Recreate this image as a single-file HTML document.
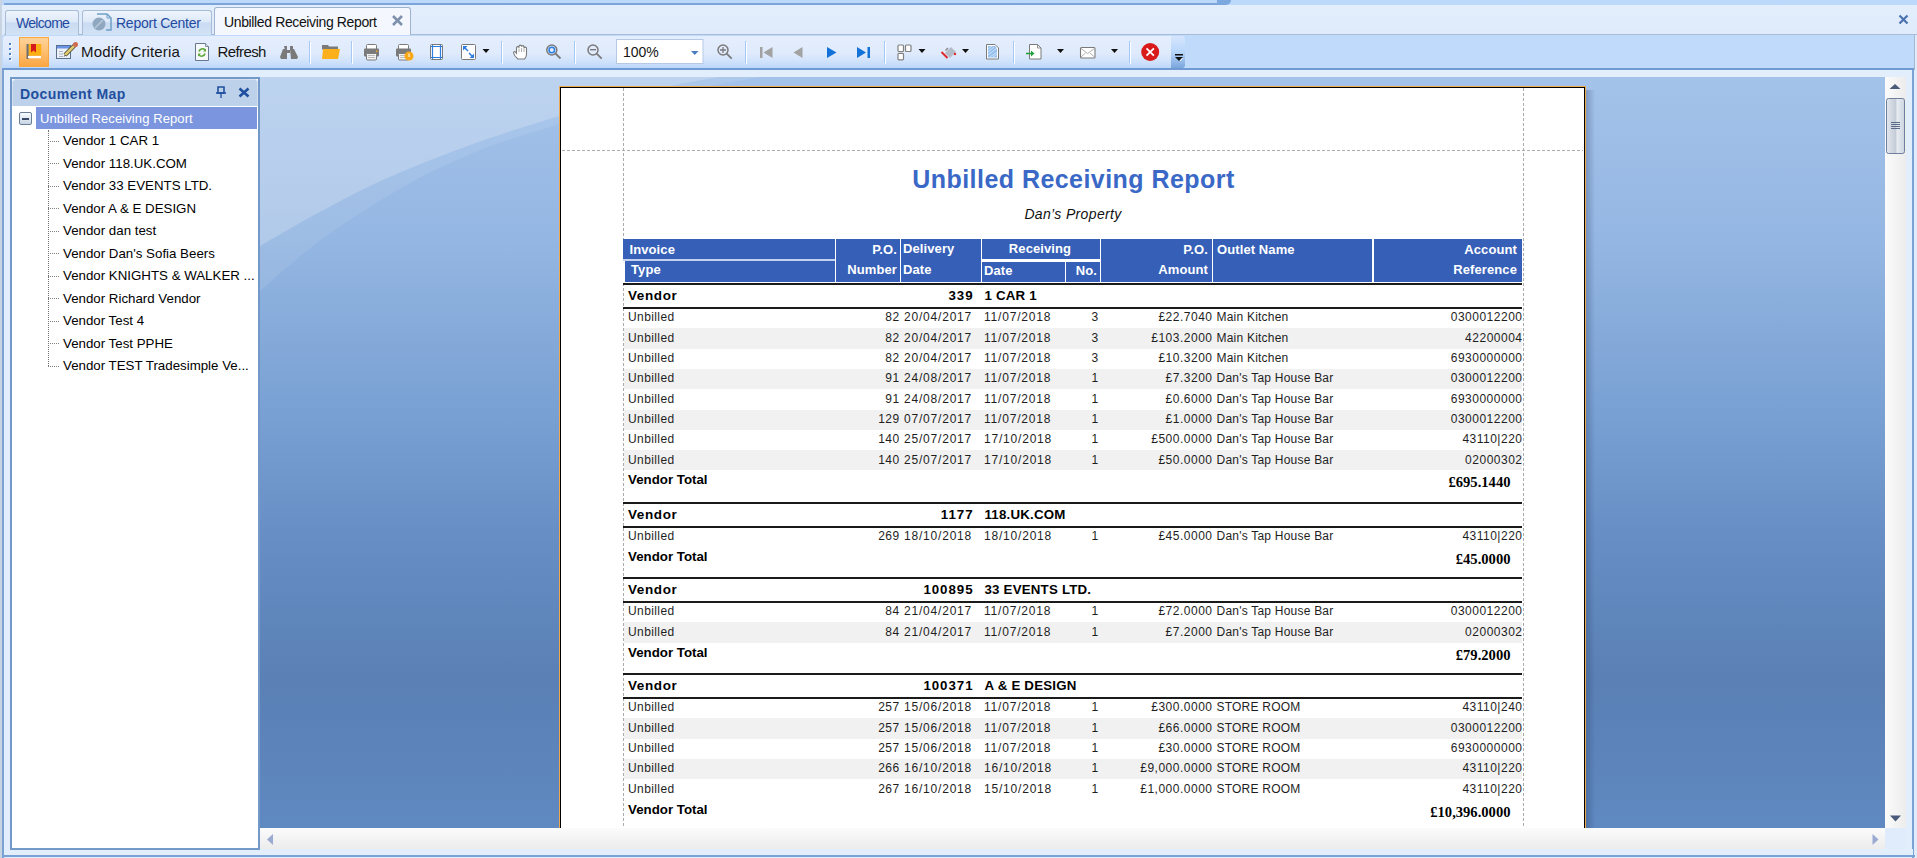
<!DOCTYPE html>
<html><head><meta charset="utf-8">
<style>
*{box-sizing:border-box}
html,body{margin:0;padding:0}
body{width:1917px;height:858px;overflow:hidden;position:relative;background:#e0ecfc;font-family:"Liberation Sans",sans-serif;color:#000}
.a{position:absolute}
.t{position:absolute;white-space:nowrap;line-height:1}
/* tabs */
.tab{position:absolute;top:10px;height:25px;border:1px solid #a9bcd6;border-bottom:none;border-radius:3px 3px 0 0;background:linear-gradient(#eef4fc 0%,#dde9f8 45%,#c9dbf2 50%,#d3e3f6 100%)}
.tabtxt{position:absolute;top:16.4px;font-size:14px;color:#1f4aa0;line-height:1}
/* toolbar */
.sep{position:absolute;top:41px;width:2px;height:23px;border-left:1px solid #9cbde8;border-right:1px solid #fff}
.dd{position:absolute;top:50px;width:0;height:0;border-left:4px solid transparent;border-right:4px solid transparent;border-top:4px solid #111}
/* document map */
.dm{position:absolute;left:63px;font-size:13.3px;line-height:1;white-space:nowrap}
.dmh{position:absolute;left:48px;width:11px;border-top:1px dotted #808080}
/* report */
.rp{position:absolute;white-space:nowrap;line-height:1}
</style></head><body>

<!-- top band -->
<div class="a" style="left:0;top:0;width:1917px;height:5px;background:#bcd8fa"></div>
<div class="a" style="left:4px;top:3px;width:1216px;height:2px;background:#7aa4da"></div><div class="a" style="left:1217px;top:0;width:14px;height:5px;background:#7ca8e0;border-radius:0 0 6px 0"></div>
<div class="a" style="left:0;top:5px;width:1917px;height:30px;background:linear-gradient(#e2eefc,#dfebfb)"></div>
<div class="a" style="left:0;top:0;width:2px;height:858px;background:#c8d4e2"></div>

<!-- tab strip bottom line -->
<div class="a" style="left:4px;top:34px;width:1913px;height:1px;background:#a8bcd8"></div>

<!-- tabs -->
<div class="tab" style="left:5px;width:74px"></div>
<div class="tabtxt" style="left:16px;letter-spacing:-0.7px">Welcome</div>
<div class="tab" style="left:82px;width:130px"></div>
<svg class="a" style="left:91px;top:12px" width="22" height="20" viewBox="0 0 22 20">
 <path d="M6 2h10l4 4v12h-5" fill="none" stroke="#6fa0c8" stroke-width="1.5"/>
 <path d="M16 2v4h4" fill="none" stroke="#6fa0c8" stroke-width="1"/>
 <circle cx="8" cy="12" r="6.5" fill="#8fa8c0"/>
 <path d="M4 16l8-8" stroke="#b8cadc" stroke-width="1.5"/>
</svg>
<div class="tabtxt" style="left:116px;letter-spacing:-0.25px">Report Center</div>
<div class="a" style="left:214px;top:7px;width:197px;height:28px;border:1px solid #9fb3d0;border-bottom:none;border-radius:3px 3px 0 0;background:#f4f8fe"></div>
<div class="tabtxt" style="left:224px;top:15.4px;color:#111;letter-spacing:-0.37px">Unbilled Receiving Report</div>
<svg class="a" style="left:391px;top:14px" width="13" height="13" viewBox="0 0 13 13"><path d="M2 2L11 11M11 2L2 11" stroke="#7f90ac" stroke-width="2.6"/></svg>

<!-- main close x -->
<svg class="a" style="left:1898px;top:14px" width="11" height="11" viewBox="0 0 11 11"><path d="M1.5 1.5L9.5 9.5M9.5 1.5L1.5 9.5" stroke="#4a72b0" stroke-width="2.2"/></svg>

<!-- toolbar area -->
<div class="a" style="left:2px;top:35px;width:1912px;height:35px;background:#c0dafc"></div>
<div class="a" style="left:2px;top:35px;width:1912px;height:35px;border-bottom:2px solid #6f9ad2"></div>
<div class="a" style="left:3px;top:36px;width:1169px;height:32px;border-radius:3px 0 0 3px;background:linear-gradient(#e4eefd 0%,#dfeafc 55%,#cfe2fb 80%,#bcd6fa 100%)"></div>
<div class="a" style="left:1171px;top:36px;width:14px;height:32px;border-radius:0 3px 3px 0;background:linear-gradient(#d6e6fc 0%,#b8d6fb 50%,#7aa6dc 100%)"></div>

<!-- below toolbar strip -->
<div class="a" style="left:2px;top:70px;width:1913px;height:7px;background:#e2eefc"></div>
<!-- outer frame borders -->
<div class="a" style="left:2px;top:70px;width:2px;height:788px;background:#7aa2d4"></div>
<div class="a" style="left:1912px;top:70px;width:2px;height:788px;background:#7aa2d4"></div><div class="a" style="left:1914px;top:35px;width:3px;height:823px;background:#e0ecfa"></div><div class="a" style="left:1914px;top:35px;width:1px;height:35px;background:#a4b8d4"></div>
<div class="a" style="left:2px;top:855px;width:1913px;height:2px;background:#7aa2d4"></div>
<div class="a" style="left:4px;top:77px;width:6px;height:778px;background:#e2eefc"></div>
<div class="a" style="left:1906px;top:77px;width:6px;height:778px;background:#e2eefc"></div>
<div class="a" style="left:4px;top:849px;width:1909px;height:6px;background:#e2eefc"></div>

<!-- TOOLBAR ICONS -->
<!-- grip -->
<svg class="a" style="left:0;top:35px" width="1200" height="35" viewBox="0 35 1200 35">
 <g fill="#fff"><rect x="10" y="44" width="2" height="2"/><rect x="10" y="49" width="2" height="2"/><rect x="10" y="54" width="2" height="2"/><rect x="10" y="59" width="2" height="2"/></g>
 <g fill="#4d7fc4"><rect x="9" y="43" width="2" height="2"/><rect x="9" y="48" width="2" height="2"/><rect x="9" y="53" width="2" height="2"/><rect x="9" y="58" width="2" height="2"/></g>
 <!-- bookmark button -->
 <defs><linearGradient id="og" x1="0" y1="0" x2="0" y2="1"><stop offset="0" stop-color="#fdd39c"/><stop offset="0.5" stop-color="#fdbf70"/><stop offset="1" stop-color="#fba542"/></linearGradient>
 <linearGradient id="sb" x1="0" y1="0" x2="0" y2="1"><stop offset="0" stop-color="#f4f6f8"/><stop offset="1" stop-color="#c4cdd8"/></linearGradient></defs>
 <rect x="19.5" y="37.5" width="29" height="29" fill="url(#og)" stroke="#f9a740" stroke-width="1"/>
 <rect x="26.5" y="44" width="2.3" height="15" fill="#707070"/>
 <rect x="28.8" y="44" width="12.4" height="11.5" fill="#fcb014"/>
 <rect x="28" y="56" width="13" height="2.2" fill="#fff"/>
 <path d="M31 44h5v8.5l-2.5-2l-2.5 2z" fill="#d41a1a"/>
 <!-- modify criteria -->
 <rect x="56.5" y="45.5" width="14" height="13" fill="#eef2f8" stroke="#58708e" stroke-width="1"/>
 <rect x="57" y="46" width="13" height="2.5" fill="#6a94e4"/>
 <g stroke="#a8b4c4" stroke-width="1"><path d="M59 51.5h4M59 54h4M59 56.5h4"/></g>
 <path d="M65 55l10-10" stroke="#3a3a2a" stroke-width="4"/>
 <path d="M65 55l10-10" stroke="#e0cc70" stroke-width="2.6"/>
 <circle cx="75.5" cy="44.5" r="2.5" fill="#d06a50"/>
 <path d="M63.5 57l1.5-2.2 0.8 0.8z" fill="#222"/>
 <!-- refresh -->
 <path d="M195.5 43.5h10l3 3v14h-13z" fill="#f6f8fa" stroke="#687890" stroke-width="1"/>
 <path d="M205.5 43.5v3h3" fill="#dde4ec" stroke="#687890" stroke-width="0.8"/>
 <path d="M199 51.5a3.5 3.5 0 0 1 6 -1.5" fill="none" stroke="#5ca838" stroke-width="1.6"/>
 <path d="M206 48.5v3h-3z" fill="#5ca838"/>
 <path d="M205 53.5a3.5 3.5 0 0 1 -6 1.5" fill="none" stroke="#5ca838" stroke-width="1.6"/>
 <path d="M198 56.5v-3h3z" fill="#5ca838"/>
 <!-- binoculars -->
 <g fill="#7a7a7a"><path d="M284 46h3v3l-1 1h-1z"/><path d="M290 46h3v4h-2l-1-1z"/>
 <path d="M283 49h4v10h-6l-1-2z"/><path d="M290 49h4l4 8-1 2h-6z"/><rect x="287" y="50" width="3" height="3"/></g>
 <!-- separators -->
 <g stroke="#a6c8f4" stroke-width="1"><path d="M309.5 41v22M351.5 41v22M501.5 41v22M574.5 41v22M745.5 41v22M884.5 41v22M1013.5 41v22M1129.5 41v22"/></g>
 <g stroke="#fff" stroke-width="1"><path d="M310.5 42v22M352.5 42v22M502.5 42v22M575.5 42v22M746.5 42v22M885.5 42v22M1014.5 42v22M1130.5 42v22"/></g>
 <!-- folder -->
 <path d="M322 45h6l1 1.5h9v3h-16z" fill="#7a7a7a"/>
 <path d="M323 49h17l-2 10h-16z" fill="#fcb11c"/>
 <!-- printer 1 -->
 <g>
 <rect x="366.5" y="44.5" width="10" height="6" rx="1" fill="#fff" stroke="#7a7a7a"/>
 <rect x="364" y="48.5" width="15" height="8" rx="1" fill="#7a7a7a"/>
 <rect x="366.5" y="53.5" width="10" height="6.5" rx="1" fill="#f2f2f2" stroke="#7a7a7a"/>
 <path d="M368 55.5h7M368 57.5h7" stroke="#aaa" stroke-width="0.8"/>
 <rect x="376" y="50.5" width="1.5" height="1.5" fill="#f0a020"/>
 </g>
 <g>
 <rect x="398.5" y="44.5" width="10" height="6" rx="1" fill="#fff" stroke="#7a7a7a"/>
 <rect x="396" y="48.5" width="15" height="8" rx="1" fill="#7a7a7a"/>
 <rect x="398.5" y="53.5" width="10" height="6.5" rx="1" fill="#f2f2f2" stroke="#7a7a7a"/>
 <path d="M400 55.5h7M400 57.5h7" stroke="#aaa" stroke-width="0.8"/>
 <circle cx="409" cy="56" r="4.5" fill="#f8a818"/>
 <path d="M409 53.5v3.5" stroke="#fff" stroke-width="1"/>
 </g>
 <!-- page setup -->
 <rect x="430.5" y="44.5" width="12" height="15" rx="1" fill="#fff" stroke="#7a7a7a" stroke-width="1"/>
 <g stroke="#2c7ee0" stroke-width="1.2"><path d="M432.5 45v14M440.5 45v14M431 46.5h11M431 57.5h11"/></g>
 <!-- scale -->
 <rect x="461.5" y="44.5" width="14" height="15" rx="1" fill="#fff" stroke="#7a7a7a" stroke-width="1"/>
 <g stroke="#2c7ee0" stroke-width="1.5" fill="none"><path d="M464.5 47.5l3.5 3.5M472.5 56.5l-3.5-3.5"/></g>
 <path d="M463 46h4.5l-4.5 4.5z M474 58h-4.5l4.5-4.5z" fill="#2c7ee0"/>
 <!-- dropdowns -->
 <g fill="#111"><path d="M482.5 49h7l-3.5 4z"/><path d="M918.5 49h7l-3.5 4z"/><path d="M962 49h7l-3.5 4z"/><path d="M1057 49h7l-3.5 4z"/><path d="M1111 49h7l-3.5 4z"/></g>
 <!-- hand -->
 <path d="M518 59C516 57.5 514 55 513.6 53C513.3 51.8 514.6 51.2 515.6 52.2L516.5 53.2V47.8C516.5 46.2 519 46.2 519 47.8V46.3C519 44.7 521.5 44.7 521.5 46.3V46.8C521.5 45.2 524 45.2 524 46.8V48.3C524 46.7 526.5 46.7 526.5 48.3V54.5C526.5 56.5 525.5 58 524.5 59Z" fill="#fff" stroke="#7a7a7a" stroke-width="1.1"/>
 <path d="M519 48.5v3.5M521.5 48v4M524 48.5v3.5" stroke="#9a9a9a" stroke-width="0.8"/>
 <!-- zoom tool -->
 <circle cx="551.8" cy="50" r="5" fill="none" stroke="#7a7a7a" stroke-width="1.5"/>
 <circle cx="551.8" cy="50" r="2.8" fill="none" stroke="#2a80e0" stroke-width="1.5"/>
 <path d="M555.5 53.5l5 5" stroke="#7a7a7a" stroke-width="1.8"/>
 <!-- zoom out -->
 <circle cx="593" cy="50" r="5" fill="none" stroke="#7a7a7a" stroke-width="1.5"/>
 <path d="M590 49.7h6" stroke="#7a7a7a" stroke-width="1.4"/>
 <path d="M596.7 53.7l5 5" stroke="#7a7a7a" stroke-width="1.8"/>
 <!-- combo -->
 <rect x="616.5" y="39.5" width="86.5" height="24" fill="#fff" stroke="#b5c9e6" stroke-width="1"/>
 <path d="M691 51h7.5l-3.75 4z" fill="#4a7cc0"/>
 <!-- zoom in -->
 <circle cx="723" cy="50" r="5" fill="none" stroke="#7a7a7a" stroke-width="1.5"/>
 <path d="M720 50h6M723 47v6" stroke="#7a7a7a" stroke-width="1.3"/>
 <path d="M726.7 53.7l5 5" stroke="#7a7a7a" stroke-width="1.8"/>
 <!-- nav -->
 <g fill="#a2a2a2"><rect x="760" y="47" width="2.5" height="11"/><path d="M772.5 47v11l-9-5.5z"/><path d="M802.5 47v11l-9-5.5z"/></g>
 <g fill="#1272d8"><path d="M827 47v11l9.5-5.5z"/><path d="M857 47v11l9-5.5z"/><rect x="867.5" y="47" width="2.5" height="11"/></g>
 <!-- multipage -->
 <g fill="#fff" stroke="#808080" stroke-width="1.2"><rect x="898" y="45" width="5.5" height="6.5" rx="1"/><rect x="905.5" y="45" width="5.5" height="6.5" rx="1"/><rect x="898" y="53.3" width="5.5" height="6.5" rx="1"/></g>
 <!-- paint -->
 <path d="M945 53l6-6l5 5l-6 6z" fill="#b4bcc8"/>
 <path d="M945 50l2.5-2.5l1 1l-2.5 2.5z" fill="#888"/>
 <path d="M941.5 52l6 6" stroke="#e02828" stroke-width="2"/>
 <circle cx="955" cy="54" r="1.2" fill="#e02828"/>
 <!-- watermark -->
 <path d="M986.5 44.5h8.5l3.5 3.5v11h-12z" fill="#fff" stroke="#7a7a7a" stroke-width="1"/>
 <path d="M988 46h7l2 2.5v9h-9z" fill="#7ab0ec" opacity="0.8"/>
 <g stroke="#fff" stroke-width="0.6" opacity="0.9"><path d="M988 49l4 -3M988 52l6-5M988 55l9-7M990 57l7-5M993 57l4-3"/></g>
 <!-- export -->
 <path d="M1029.5 44.5h8l3.5 3.5v11h-11.5z" fill="#fff" stroke="#7a7a7a" stroke-width="1"/>
 <path d="M1037.5 44.5v3.5h3.5" fill="none" stroke="#7a7a7a" stroke-width="0.8"/>
 <path d="M1026 53.5h6" stroke="#22a040" stroke-width="1.6"/>
 <path d="M1031 50.5l3.5 3l-3.5 3z" fill="#22a040"/>
 <!-- email -->
 <rect x="1080.5" y="47.5" width="14.5" height="10.5" rx="1" fill="#fff" stroke="#7a7a7a" stroke-width="1.1"/>
 <path d="M1081 48.5l6.7 5l6.7-5M1081 57l4.5-4M1094.5 57l-4.5-4" fill="none" stroke="#9a9a9a" stroke-width="0.8"/>
 <!-- close -->
 <circle cx="1150.2" cy="52" r="9" fill="#d81a1a"/>
 <path d="M1146.5 48.3l7.4 7.4M1153.9 48.3l-7.4 7.4" stroke="#fff" stroke-width="1.8"/>
 <!-- customize -->
 <rect x="1175" y="54" width="8" height="1.5" fill="#111"/>
 <path d="M1175 57h8l-4 4z" fill="#111"/>
 <path d="M1180 61l2.5-3" stroke="#fff" stroke-width="1"/>
</svg>
<div class="t" style="left:81px;top:43.8px;font-size:15px;color:#151515;letter-spacing:0.15px">Modify Criteria</div>
<div class="t" style="left:217.5px;top:43.8px;font-size:15px;color:#151515;letter-spacing:-0.6px">Refresh</div>
<div class="t" style="left:623px;top:45.2px;font-size:14px;color:#151515">100%</div>


<!-- DOCUMENT MAP -->
<!-- document map panel -->
<div class="a" style="left:10px;top:77px;width:250px;height:773px;border:2px solid #7399c8;background:#fff"></div>
<div class="a" style="left:12px;top:79px;width:246px;height:27px;background:#bdd1ea;border-radius:4px 4px 0 0;border:1px solid #d2e0f2;border-bottom:none"></div>
<div class="t" style="left:20px;top:86.6px;font-size:14px;font-weight:bold;color:#1f4f9e;letter-spacing:0.45px">Document Map</div>
<svg class="a" style="left:210px;top:82px" width="45" height="20" viewBox="210 82 45 20">
 <path d="M218 87h6v6h-6z" fill="none" stroke="#1f4f9e" stroke-width="1.6"/>
 <path d="M216 93h10M221 93v5" stroke="#1f4f9e" stroke-width="1.3"/>
 <path d="M239.5 88.5l9 8M248.5 88.5l-9 8" stroke="#1f4f9e" stroke-width="2.6"/>
</svg>
<div class="a" style="left:12px;top:106px;width:246px;height:1px;background:#fff"></div>
<div class="a" style="left:36px;top:107px;width:221px;height:22px;background:#7b96df"></div>
<div class="a" style="left:19px;top:112px;width:13px;height:13px;border:1px solid #6a7e98;border-radius:2px;background:linear-gradient(#fafcfe,#c8d4e4)"></div>
<div class="a" style="left:22px;top:118px;width:7px;height:1.6px;background:#384a66"></div>
<div class="t" style="left:40px;top:111.5px;font-size:13px;color:#fff;letter-spacing:0.1px">Unbilled Receiving Report</div>
<div class="a" style="left:48px;top:130px;width:0;height:236px;border-left:1px dotted #707070"></div>
<div class="dmh" style="top:140.5px"></div>
<div class="dm" style="top:134.0px">Vendor 1 CAR 1</div>
<div class="dmh" style="top:163.0px"></div>
<div class="dm" style="top:156.5px">Vendor 118.UK.COM</div>
<div class="dmh" style="top:185.5px"></div>
<div class="dm" style="top:179.0px">Vendor 33 EVENTS LTD.</div>
<div class="dmh" style="top:208.0px"></div>
<div class="dm" style="top:201.5px">Vendor A &amp; E DESIGN</div>
<div class="dmh" style="top:230.5px"></div>
<div class="dm" style="top:224.0px">Vendor dan test</div>
<div class="dmh" style="top:253.0px"></div>
<div class="dm" style="top:246.5px">Vendor Dan's Sofia Beers</div>
<div class="dmh" style="top:275.5px"></div>
<div class="dm" style="top:269.0px">Vendor KNIGHTS &amp; WALKER ...</div>
<div class="dmh" style="top:298.0px"></div>
<div class="dm" style="top:291.5px">Vendor Richard Vendor</div>
<div class="dmh" style="top:320.5px"></div>
<div class="dm" style="top:314.0px">Vendor Test 4</div>
<div class="dmh" style="top:343.0px"></div>
<div class="dm" style="top:336.5px">Vendor Test PPHE</div>
<div class="dmh" style="top:365.5px"></div>
<div class="dm" style="top:359.0px">Vendor TEST Tradesimple Ve...</div>


<!-- VIEWER -->
<div class="a" style="left:260px;top:77px;width:1625px;height:751px;overflow:hidden">
<svg class="a" style="left:0;top:0" width="1625" height="751" viewBox="260 77 1625 751" preserveAspectRatio="none">
<defs><linearGradient id="vg" x1="0" y1="77" x2="0" y2="828" gradientUnits="userSpaceOnUse">
<stop offset="0" stop-color="#a4c3ea"/><stop offset="0.22" stop-color="#94b6e2"/><stop offset="0.46" stop-color="#779fd2"/><stop offset="0.6" stop-color="#6890c6"/><stop offset="0.8" stop-color="#5a80b5"/><stop offset="1" stop-color="#5f89c1"/></linearGradient></defs>
<rect x="260" y="77" width="1625" height="751" fill="url(#vg)"/>
<path d="M260 291C269.3 283.1 297.3 257.7 316 243.5C334.7 229.3 353.3 217.3 372 205.7C390.7 194.0 409.3 183.1 428 173.6C446.7 164.1 465.3 155.7 484 148.4C502.7 141.1 520.7 136.1 540 130C559.3 123.9 576.7 118.3 600 112C623.3 105.7 653.3 97.8 680 92C706.7 86.2 746.7 79.5 760 77L900 60L240 60L240 291z" fill="#fff" opacity="0.09"/>
<path d="M260 246C269.3 240.7 297.3 224.2 316 214C334.7 203.8 353.3 193.8 372 185C390.7 176.2 409.3 168.5 428 161C446.7 153.5 465.3 146.5 484 140C502.7 133.5 520.7 128.0 540 122C559.3 116.0 580.0 109.7 600 104C620.0 98.3 640.0 92.5 660 88C680.0 83.5 710.0 78.8 720 77L900 60L240 60L240 246z" fill="#fff" opacity="0.21"/>
</svg>
</div>
<div class="a" style="left:1586px;top:90px;width:9px;height:738px;background:linear-gradient(90deg,rgba(30,50,90,0.28),rgba(30,50,90,0))"></div>
<div class="a" style="left:559px;top:86px;width:1027px;height:760px;border:1px solid #f0a850;border-bottom:none"></div>
<div class="a" style="left:560px;top:87px;width:1025px;height:760px;border:1px solid #000;border-bottom:none;background:#fff"></div>
<div class="a" style="left:561px;top:88px;width:1023px;height:740px;overflow:hidden">
<div class="a" style="left:62px;top:0px;width:1px;height:740px;background:repeating-linear-gradient(180deg,#ababab 0 3px,transparent 3px 5px)"></div>
<div class="a" style="left:962px;top:0px;width:1px;height:740px;background:repeating-linear-gradient(180deg,#ababab 0 3px,transparent 3px 5px)"></div>
<div class="a" style="left:1px;top:62px;width:1021px;height:1px;background:repeating-linear-gradient(90deg,#ababab 0 3px,transparent 3px 5px)"></div>
<div class="rp" style="left:312.5px;width:400px;text-align:center;top:79px;font-weight:bold;font-size:25px;color:#3a68c6;letter-spacing:0.45px">Unbilled Receiving Report</div>
<div class="rp" style="left:312px;width:400px;text-align:center;top:119px;font-style:italic;font-size:14px;color:#111;letter-spacing:0.35px">Dan’s Property</div>
<div class="a" style="left:62px;top:151px;width:899px;height:43px;background:#c8d6ee"></div>
<div class="a" style="left:62px;top:151px;width:212px;height:20px;background:#365fb8"></div>
<div class="a" style="left:64px;top:172.5px;width:210px;height:21.5px;background:#365fb8"></div>
<div class="a" style="left:275px;top:151px;width:64px;height:43px;background:#365fb8"></div>
<div class="a" style="left:340px;top:151px;width:80px;height:43px;background:#365fb8"></div>
<div class="a" style="left:421px;top:151px;width:118px;height:19.5px;background:#365fb8"></div>
<div class="a" style="left:421px;top:174px;width:83px;height:20px;background:#365fb8"></div>
<div class="a" style="left:505px;top:174px;width:34px;height:20px;background:#365fb8"></div>
<div class="a" style="left:540px;top:151px;width:111px;height:43px;background:#365fb8"></div>
<div class="a" style="left:652px;top:151px;width:159px;height:43px;background:#365fb8"></div>
<div class="a" style="left:812.5px;top:151px;width:148.0px;height:43px;background:#365fb8"></div>
<div class="a" style="left:274px;top:151px;width:1px;height:43px;background:#fff"></div>
<div class="a" style="left:339px;top:151px;width:1px;height:43px;background:#fff"></div>
<div class="a" style="left:420px;top:151px;width:1px;height:43px;background:#fff"></div>
<div class="a" style="left:539px;top:151px;width:1px;height:43px;background:#fff"></div>
<div class="a" style="left:651px;top:151px;width:1px;height:43px;background:#fff"></div>
<div class="a" style="left:811px;top:151px;width:1.5px;height:43px;background:#fff"></div>
<div class="a" style="left:421px;top:170.5px;width:118px;height:3.5px;background:#fff"></div>
<div class="a" style="left:504px;top:174px;width:1px;height:20px;background:#fff"></div>
<div class="a" style="left:62px;top:171px;width:212px;height:1.5px;background:#c4d2ee"></div>
<div class="a" style="left:62px;top:172.5px;width:2px;height:21.5px;background:#fff"></div>
<div class="rp" style="left:68.5px;top:154.5px;font-weight:bold;font-size:13px;color:#fff;letter-spacing:0.1px">Invoice</div>
<div class="rp" style="left:70px;top:175px;font-weight:bold;font-size:13px;color:#fff;letter-spacing:0.1px">Type</div>
<div class="rp" style="right:687px;top:154.5px;font-weight:bold;font-size:13px;color:#fff;letter-spacing:0.1px">P.O.</div>
<div class="rp" style="right:687px;top:175px;font-weight:bold;font-size:13px;color:#fff;letter-spacing:0.1px">Number</div>
<div class="rp" style="left:342px;top:154px;font-weight:bold;font-size:13px;color:#fff;letter-spacing:0.1px">Delivery</div>
<div class="rp" style="left:342px;top:175px;font-weight:bold;font-size:13px;color:#fff;letter-spacing:0.1px">Date</div>
<div class="rp" style="left:279px;width:400px;text-align:center;top:154px;font-weight:bold;font-size:13px;color:#fff;letter-spacing:0.1px">Receiving</div>
<div class="rp" style="left:423px;top:175.5px;font-weight:bold;font-size:13px;color:#fff;letter-spacing:0.1px">Date</div>
<div class="rp" style="right:487px;top:175.5px;font-weight:bold;font-size:13px;color:#fff;letter-spacing:0.1px">No.</div>
<div class="rp" style="right:376px;top:154.5px;font-weight:bold;font-size:13px;color:#fff;letter-spacing:0.1px">P.O.</div>
<div class="rp" style="right:376px;top:175px;font-weight:bold;font-size:13px;color:#fff;letter-spacing:0.1px">Amount</div>
<div class="rp" style="left:656px;top:154.5px;font-weight:bold;font-size:13px;color:#fff;letter-spacing:0.1px">Outlet Name</div>
<div class="rp" style="right:67px;top:154.5px;font-weight:bold;font-size:13px;color:#fff;letter-spacing:0.1px">Account</div>
<div class="rp" style="right:67px;top:175px;font-weight:bold;font-size:13px;color:#fff;letter-spacing:0.1px">Reference</div>
<div class="a" style="left:62px;top:195px;width:899px;height:2px;background:#1a1a1a"></div>
<div class="rp" style="left:67px;top:200.5px;font-weight:bold;font-size:14px;color:#000;font-size:13.5px;letter-spacing:0.6px">Vendor</div>
<div class="rp" style="right:610.5px;top:200.5px;font-weight:bold;font-size:14px;color:#000;font-size:13.3px;letter-spacing:0.95px">339</div>
<div class="rp" style="left:423.5px;top:200.5px;font-weight:bold;font-size:14px;color:#000;font-size:13.3px;letter-spacing:0.2px">1 CAR 1</div>
<div class="a" style="left:62px;top:219px;width:899px;height:1.6px;background:#1a1a1a"></div>
<div class="rp" style="left:67px;top:223.39999999999998px;font-size:12px;color:#1e1e1e;letter-spacing:0.4px">Unbilled</div>
<div class="rp" style="right:684.5px;top:223.39999999999998px;font-size:12px;color:#1e1e1e;letter-spacing:0.4px">82</div>
<div class="rp" style="left:343px;top:223.39999999999998px;font-size:12px;color:#1e1e1e;letter-spacing:0.4px;letter-spacing:0.8px">20/04/2017</div>
<div class="rp" style="left:423px;top:223.39999999999998px;font-size:12px;color:#1e1e1e;letter-spacing:0.4px;letter-spacing:0.8px">11/07/2018</div>
<div class="rp" style="right:485.5px;top:223.39999999999998px;font-size:12px;color:#1e1e1e;letter-spacing:0.4px">3</div>
<div class="rp" style="right:371.5px;top:223.39999999999998px;font-size:12px;color:#1e1e1e;letter-spacing:0.4px;letter-spacing:0.5px">£22.7040</div>
<div class="rp" style="left:655.5px;top:223.39999999999998px;font-size:12px;color:#1e1e1e;letter-spacing:0.4px;letter-spacing:0.22px">Main Kitchen</div>
<div class="rp" style="right:61.5px;top:223.39999999999998px;font-size:12px;color:#1e1e1e;letter-spacing:0.4px;letter-spacing:0.5px">0300012200</div>
<div class="a" style="left:63px;top:240.3px;width:898px;height:20.3px;background:#f1f1f1"></div>
<div class="rp" style="left:67px;top:243.7px;font-size:12px;color:#1e1e1e;letter-spacing:0.4px">Unbilled</div>
<div class="rp" style="right:684.5px;top:243.7px;font-size:12px;color:#1e1e1e;letter-spacing:0.4px">82</div>
<div class="rp" style="left:343px;top:243.7px;font-size:12px;color:#1e1e1e;letter-spacing:0.4px;letter-spacing:0.8px">20/04/2017</div>
<div class="rp" style="left:423px;top:243.7px;font-size:12px;color:#1e1e1e;letter-spacing:0.4px;letter-spacing:0.8px">11/07/2018</div>
<div class="rp" style="right:485.5px;top:243.7px;font-size:12px;color:#1e1e1e;letter-spacing:0.4px">3</div>
<div class="rp" style="right:371.5px;top:243.7px;font-size:12px;color:#1e1e1e;letter-spacing:0.4px;letter-spacing:0.5px">£103.2000</div>
<div class="rp" style="left:655.5px;top:243.7px;font-size:12px;color:#1e1e1e;letter-spacing:0.4px;letter-spacing:0.22px">Main Kitchen</div>
<div class="rp" style="right:61.5px;top:243.7px;font-size:12px;color:#1e1e1e;letter-spacing:0.4px;letter-spacing:0.5px">42200004</div>
<div class="rp" style="left:67px;top:264.0px;font-size:12px;color:#1e1e1e;letter-spacing:0.4px">Unbilled</div>
<div class="rp" style="right:684.5px;top:264.0px;font-size:12px;color:#1e1e1e;letter-spacing:0.4px">82</div>
<div class="rp" style="left:343px;top:264.0px;font-size:12px;color:#1e1e1e;letter-spacing:0.4px;letter-spacing:0.8px">20/04/2017</div>
<div class="rp" style="left:423px;top:264.0px;font-size:12px;color:#1e1e1e;letter-spacing:0.4px;letter-spacing:0.8px">11/07/2018</div>
<div class="rp" style="right:485.5px;top:264.0px;font-size:12px;color:#1e1e1e;letter-spacing:0.4px">3</div>
<div class="rp" style="right:371.5px;top:264.0px;font-size:12px;color:#1e1e1e;letter-spacing:0.4px;letter-spacing:0.5px">£10.3200</div>
<div class="rp" style="left:655.5px;top:264.0px;font-size:12px;color:#1e1e1e;letter-spacing:0.4px;letter-spacing:0.22px">Main Kitchen</div>
<div class="rp" style="right:61.5px;top:264.0px;font-size:12px;color:#1e1e1e;letter-spacing:0.4px;letter-spacing:0.5px">6930000000</div>
<div class="a" style="left:63px;top:280.9px;width:898px;height:20.3px;background:#f1f1f1"></div>
<div class="rp" style="left:67px;top:284.29999999999995px;font-size:12px;color:#1e1e1e;letter-spacing:0.4px">Unbilled</div>
<div class="rp" style="right:684.5px;top:284.29999999999995px;font-size:12px;color:#1e1e1e;letter-spacing:0.4px">91</div>
<div class="rp" style="left:343px;top:284.29999999999995px;font-size:12px;color:#1e1e1e;letter-spacing:0.4px;letter-spacing:0.8px">24/08/2017</div>
<div class="rp" style="left:423px;top:284.29999999999995px;font-size:12px;color:#1e1e1e;letter-spacing:0.4px;letter-spacing:0.8px">11/07/2018</div>
<div class="rp" style="right:485.5px;top:284.29999999999995px;font-size:12px;color:#1e1e1e;letter-spacing:0.4px">1</div>
<div class="rp" style="right:371.5px;top:284.29999999999995px;font-size:12px;color:#1e1e1e;letter-spacing:0.4px;letter-spacing:0.5px">£7.3200</div>
<div class="rp" style="left:655.5px;top:284.29999999999995px;font-size:12px;color:#1e1e1e;letter-spacing:0.4px;letter-spacing:0.22px">Dan's Tap House Bar</div>
<div class="rp" style="right:61.5px;top:284.29999999999995px;font-size:12px;color:#1e1e1e;letter-spacing:0.4px;letter-spacing:0.5px">0300012200</div>
<div class="rp" style="left:67px;top:304.59999999999997px;font-size:12px;color:#1e1e1e;letter-spacing:0.4px">Unbilled</div>
<div class="rp" style="right:684.5px;top:304.59999999999997px;font-size:12px;color:#1e1e1e;letter-spacing:0.4px">91</div>
<div class="rp" style="left:343px;top:304.59999999999997px;font-size:12px;color:#1e1e1e;letter-spacing:0.4px;letter-spacing:0.8px">24/08/2017</div>
<div class="rp" style="left:423px;top:304.59999999999997px;font-size:12px;color:#1e1e1e;letter-spacing:0.4px;letter-spacing:0.8px">11/07/2018</div>
<div class="rp" style="right:485.5px;top:304.59999999999997px;font-size:12px;color:#1e1e1e;letter-spacing:0.4px">1</div>
<div class="rp" style="right:371.5px;top:304.59999999999997px;font-size:12px;color:#1e1e1e;letter-spacing:0.4px;letter-spacing:0.5px">£0.6000</div>
<div class="rp" style="left:655.5px;top:304.59999999999997px;font-size:12px;color:#1e1e1e;letter-spacing:0.4px;letter-spacing:0.22px">Dan's Tap House Bar</div>
<div class="rp" style="right:61.5px;top:304.59999999999997px;font-size:12px;color:#1e1e1e;letter-spacing:0.4px;letter-spacing:0.5px">6930000000</div>
<div class="a" style="left:63px;top:321.5px;width:898px;height:20.3px;background:#f1f1f1"></div>
<div class="rp" style="left:67px;top:324.9px;font-size:12px;color:#1e1e1e;letter-spacing:0.4px">Unbilled</div>
<div class="rp" style="right:684.5px;top:324.9px;font-size:12px;color:#1e1e1e;letter-spacing:0.4px">129</div>
<div class="rp" style="left:343px;top:324.9px;font-size:12px;color:#1e1e1e;letter-spacing:0.4px;letter-spacing:0.8px">07/07/2017</div>
<div class="rp" style="left:423px;top:324.9px;font-size:12px;color:#1e1e1e;letter-spacing:0.4px;letter-spacing:0.8px">11/07/2018</div>
<div class="rp" style="right:485.5px;top:324.9px;font-size:12px;color:#1e1e1e;letter-spacing:0.4px">1</div>
<div class="rp" style="right:371.5px;top:324.9px;font-size:12px;color:#1e1e1e;letter-spacing:0.4px;letter-spacing:0.5px">£1.0000</div>
<div class="rp" style="left:655.5px;top:324.9px;font-size:12px;color:#1e1e1e;letter-spacing:0.4px;letter-spacing:0.22px">Dan's Tap House Bar</div>
<div class="rp" style="right:61.5px;top:324.9px;font-size:12px;color:#1e1e1e;letter-spacing:0.4px;letter-spacing:0.5px">0300012200</div>
<div class="rp" style="left:67px;top:345.2px;font-size:12px;color:#1e1e1e;letter-spacing:0.4px">Unbilled</div>
<div class="rp" style="right:684.5px;top:345.2px;font-size:12px;color:#1e1e1e;letter-spacing:0.4px">140</div>
<div class="rp" style="left:343px;top:345.2px;font-size:12px;color:#1e1e1e;letter-spacing:0.4px;letter-spacing:0.8px">25/07/2017</div>
<div class="rp" style="left:423px;top:345.2px;font-size:12px;color:#1e1e1e;letter-spacing:0.4px;letter-spacing:0.8px">17/10/2018</div>
<div class="rp" style="right:485.5px;top:345.2px;font-size:12px;color:#1e1e1e;letter-spacing:0.4px">1</div>
<div class="rp" style="right:371.5px;top:345.2px;font-size:12px;color:#1e1e1e;letter-spacing:0.4px;letter-spacing:0.5px">£500.0000</div>
<div class="rp" style="left:655.5px;top:345.2px;font-size:12px;color:#1e1e1e;letter-spacing:0.4px;letter-spacing:0.22px">Dan's Tap House Bar</div>
<div class="rp" style="right:61.5px;top:345.2px;font-size:12px;color:#1e1e1e;letter-spacing:0.4px;letter-spacing:0.5px">43110|220</div>
<div class="a" style="left:63px;top:362.1px;width:898px;height:20.3px;background:#f1f1f1"></div>
<div class="rp" style="left:67px;top:365.5px;font-size:12px;color:#1e1e1e;letter-spacing:0.4px">Unbilled</div>
<div class="rp" style="right:684.5px;top:365.5px;font-size:12px;color:#1e1e1e;letter-spacing:0.4px">140</div>
<div class="rp" style="left:343px;top:365.5px;font-size:12px;color:#1e1e1e;letter-spacing:0.4px;letter-spacing:0.8px">25/07/2017</div>
<div class="rp" style="left:423px;top:365.5px;font-size:12px;color:#1e1e1e;letter-spacing:0.4px;letter-spacing:0.8px">17/10/2018</div>
<div class="rp" style="right:485.5px;top:365.5px;font-size:12px;color:#1e1e1e;letter-spacing:0.4px">1</div>
<div class="rp" style="right:371.5px;top:365.5px;font-size:12px;color:#1e1e1e;letter-spacing:0.4px;letter-spacing:0.5px">£50.0000</div>
<div class="rp" style="left:655.5px;top:365.5px;font-size:12px;color:#1e1e1e;letter-spacing:0.4px;letter-spacing:0.22px">Dan's Tap House Bar</div>
<div class="rp" style="right:61.5px;top:365.5px;font-size:12px;color:#1e1e1e;letter-spacing:0.4px;letter-spacing:0.5px">02000302</div>
<div class="rp" style="left:67px;top:385.4px;font-weight:bold;font-size:13.3px;color:#000">Vendor Total</div>
<div class="rp" style="right:73.5px;top:387.4px;font-weight:bold;font-size:14.6px;font-family:'Liberation Serif',serif;color:#000">£695.1440</div>
<div class="a" style="left:62px;top:414px;width:899px;height:1.6px;background:#1a1a1a"></div>
<div class="rp" style="left:67px;top:419.5px;font-weight:bold;font-size:14px;color:#000;font-size:13.5px;letter-spacing:0.6px">Vendor</div>
<div class="rp" style="right:610.5px;top:419.5px;font-weight:bold;font-size:14px;color:#000;font-size:13.3px;letter-spacing:0.95px">1177</div>
<div class="rp" style="left:423.5px;top:419.5px;font-weight:bold;font-size:14px;color:#000;font-size:13.3px;letter-spacing:0.2px">118.UK.COM</div>
<div class="a" style="left:62px;top:438px;width:899px;height:1.6px;background:#1a1a1a"></div>
<div class="rp" style="left:67px;top:442.4px;font-size:12px;color:#1e1e1e;letter-spacing:0.4px">Unbilled</div>
<div class="rp" style="right:684.5px;top:442.4px;font-size:12px;color:#1e1e1e;letter-spacing:0.4px">269</div>
<div class="rp" style="left:343px;top:442.4px;font-size:12px;color:#1e1e1e;letter-spacing:0.4px;letter-spacing:0.8px">18/10/2018</div>
<div class="rp" style="left:423px;top:442.4px;font-size:12px;color:#1e1e1e;letter-spacing:0.4px;letter-spacing:0.8px">18/10/2018</div>
<div class="rp" style="right:485.5px;top:442.4px;font-size:12px;color:#1e1e1e;letter-spacing:0.4px">1</div>
<div class="rp" style="right:371.5px;top:442.4px;font-size:12px;color:#1e1e1e;letter-spacing:0.4px;letter-spacing:0.5px">£45.0000</div>
<div class="rp" style="left:655.5px;top:442.4px;font-size:12px;color:#1e1e1e;letter-spacing:0.4px;letter-spacing:0.22px">Dan's Tap House Bar</div>
<div class="rp" style="right:61.5px;top:442.4px;font-size:12px;color:#1e1e1e;letter-spacing:0.4px;letter-spacing:0.5px">43110|220</div>
<div class="rp" style="left:67px;top:462.29999999999995px;font-weight:bold;font-size:13.3px;color:#000">Vendor Total</div>
<div class="rp" style="right:73.5px;top:464.29999999999995px;font-weight:bold;font-size:14.6px;font-family:'Liberation Serif',serif;color:#000">£45.0000</div>
<div class="a" style="left:62px;top:489px;width:899px;height:1.6px;background:#1a1a1a"></div>
<div class="rp" style="left:67px;top:494.5px;font-weight:bold;font-size:14px;color:#000;font-size:13.5px;letter-spacing:0.6px">Vendor</div>
<div class="rp" style="right:610.5px;top:494.5px;font-weight:bold;font-size:14px;color:#000;font-size:13.3px;letter-spacing:0.95px">100895</div>
<div class="rp" style="left:423.5px;top:494.5px;font-weight:bold;font-size:14px;color:#000;font-size:13.3px;letter-spacing:0.2px">33 EVENTS LTD.</div>
<div class="a" style="left:62px;top:513px;width:899px;height:1.6px;background:#1a1a1a"></div>
<div class="rp" style="left:67px;top:517.4px;font-size:12px;color:#1e1e1e;letter-spacing:0.4px">Unbilled</div>
<div class="rp" style="right:684.5px;top:517.4px;font-size:12px;color:#1e1e1e;letter-spacing:0.4px">84</div>
<div class="rp" style="left:343px;top:517.4px;font-size:12px;color:#1e1e1e;letter-spacing:0.4px;letter-spacing:0.8px">21/04/2017</div>
<div class="rp" style="left:423px;top:517.4px;font-size:12px;color:#1e1e1e;letter-spacing:0.4px;letter-spacing:0.8px">11/07/2018</div>
<div class="rp" style="right:485.5px;top:517.4px;font-size:12px;color:#1e1e1e;letter-spacing:0.4px">1</div>
<div class="rp" style="right:371.5px;top:517.4px;font-size:12px;color:#1e1e1e;letter-spacing:0.4px;letter-spacing:0.5px">£72.0000</div>
<div class="rp" style="left:655.5px;top:517.4px;font-size:12px;color:#1e1e1e;letter-spacing:0.4px;letter-spacing:0.22px">Dan's Tap House Bar</div>
<div class="rp" style="right:61.5px;top:517.4px;font-size:12px;color:#1e1e1e;letter-spacing:0.4px;letter-spacing:0.5px">0300012200</div>
<div class="a" style="left:63px;top:534.3px;width:898px;height:20.3px;background:#f1f1f1"></div>
<div class="rp" style="left:67px;top:537.6999999999999px;font-size:12px;color:#1e1e1e;letter-spacing:0.4px">Unbilled</div>
<div class="rp" style="right:684.5px;top:537.6999999999999px;font-size:12px;color:#1e1e1e;letter-spacing:0.4px">84</div>
<div class="rp" style="left:343px;top:537.6999999999999px;font-size:12px;color:#1e1e1e;letter-spacing:0.4px;letter-spacing:0.8px">21/04/2017</div>
<div class="rp" style="left:423px;top:537.6999999999999px;font-size:12px;color:#1e1e1e;letter-spacing:0.4px;letter-spacing:0.8px">11/07/2018</div>
<div class="rp" style="right:485.5px;top:537.6999999999999px;font-size:12px;color:#1e1e1e;letter-spacing:0.4px">1</div>
<div class="rp" style="right:371.5px;top:537.6999999999999px;font-size:12px;color:#1e1e1e;letter-spacing:0.4px;letter-spacing:0.5px">£7.2000</div>
<div class="rp" style="left:655.5px;top:537.6999999999999px;font-size:12px;color:#1e1e1e;letter-spacing:0.4px;letter-spacing:0.22px">Dan's Tap House Bar</div>
<div class="rp" style="right:61.5px;top:537.6999999999999px;font-size:12px;color:#1e1e1e;letter-spacing:0.4px;letter-spacing:0.5px">02000302</div>
<div class="rp" style="left:67px;top:557.6px;font-weight:bold;font-size:13.3px;color:#000">Vendor Total</div>
<div class="rp" style="right:73.5px;top:559.6px;font-weight:bold;font-size:14.6px;font-family:'Liberation Serif',serif;color:#000">£79.2000</div>
<div class="a" style="left:62px;top:585px;width:899px;height:1.6px;background:#1a1a1a"></div>
<div class="rp" style="left:67px;top:590.5px;font-weight:bold;font-size:14px;color:#000;font-size:13.5px;letter-spacing:0.6px">Vendor</div>
<div class="rp" style="right:610.5px;top:590.5px;font-weight:bold;font-size:14px;color:#000;font-size:13.3px;letter-spacing:0.95px">100371</div>
<div class="rp" style="left:423.5px;top:590.5px;font-weight:bold;font-size:14px;color:#000;font-size:13.3px;letter-spacing:0.2px">A &amp; E DESIGN</div>
<div class="a" style="left:62px;top:609px;width:899px;height:1.6px;background:#1a1a1a"></div>
<div class="rp" style="left:67px;top:613.4px;font-size:12px;color:#1e1e1e;letter-spacing:0.4px">Unbilled</div>
<div class="rp" style="right:684.5px;top:613.4px;font-size:12px;color:#1e1e1e;letter-spacing:0.4px">257</div>
<div class="rp" style="left:343px;top:613.4px;font-size:12px;color:#1e1e1e;letter-spacing:0.4px;letter-spacing:0.8px">15/06/2018</div>
<div class="rp" style="left:423px;top:613.4px;font-size:12px;color:#1e1e1e;letter-spacing:0.4px;letter-spacing:0.8px">11/07/2018</div>
<div class="rp" style="right:485.5px;top:613.4px;font-size:12px;color:#1e1e1e;letter-spacing:0.4px">1</div>
<div class="rp" style="right:371.5px;top:613.4px;font-size:12px;color:#1e1e1e;letter-spacing:0.4px;letter-spacing:0.5px">£300.0000</div>
<div class="rp" style="left:655.5px;top:613.4px;font-size:12px;color:#1e1e1e;letter-spacing:0.4px;letter-spacing:0.22px">STORE ROOM</div>
<div class="rp" style="right:61.5px;top:613.4px;font-size:12px;color:#1e1e1e;letter-spacing:0.4px;letter-spacing:0.5px">43110|240</div>
<div class="a" style="left:63px;top:630.3px;width:898px;height:20.3px;background:#f1f1f1"></div>
<div class="rp" style="left:67px;top:633.6999999999999px;font-size:12px;color:#1e1e1e;letter-spacing:0.4px">Unbilled</div>
<div class="rp" style="right:684.5px;top:633.6999999999999px;font-size:12px;color:#1e1e1e;letter-spacing:0.4px">257</div>
<div class="rp" style="left:343px;top:633.6999999999999px;font-size:12px;color:#1e1e1e;letter-spacing:0.4px;letter-spacing:0.8px">15/06/2018</div>
<div class="rp" style="left:423px;top:633.6999999999999px;font-size:12px;color:#1e1e1e;letter-spacing:0.4px;letter-spacing:0.8px">11/07/2018</div>
<div class="rp" style="right:485.5px;top:633.6999999999999px;font-size:12px;color:#1e1e1e;letter-spacing:0.4px">1</div>
<div class="rp" style="right:371.5px;top:633.6999999999999px;font-size:12px;color:#1e1e1e;letter-spacing:0.4px;letter-spacing:0.5px">£66.0000</div>
<div class="rp" style="left:655.5px;top:633.6999999999999px;font-size:12px;color:#1e1e1e;letter-spacing:0.4px;letter-spacing:0.22px">STORE ROOM</div>
<div class="rp" style="right:61.5px;top:633.6999999999999px;font-size:12px;color:#1e1e1e;letter-spacing:0.4px;letter-spacing:0.5px">0300012200</div>
<div class="rp" style="left:67px;top:654.0px;font-size:12px;color:#1e1e1e;letter-spacing:0.4px">Unbilled</div>
<div class="rp" style="right:684.5px;top:654.0px;font-size:12px;color:#1e1e1e;letter-spacing:0.4px">257</div>
<div class="rp" style="left:343px;top:654.0px;font-size:12px;color:#1e1e1e;letter-spacing:0.4px;letter-spacing:0.8px">15/06/2018</div>
<div class="rp" style="left:423px;top:654.0px;font-size:12px;color:#1e1e1e;letter-spacing:0.4px;letter-spacing:0.8px">11/07/2018</div>
<div class="rp" style="right:485.5px;top:654.0px;font-size:12px;color:#1e1e1e;letter-spacing:0.4px">1</div>
<div class="rp" style="right:371.5px;top:654.0px;font-size:12px;color:#1e1e1e;letter-spacing:0.4px;letter-spacing:0.5px">£30.0000</div>
<div class="rp" style="left:655.5px;top:654.0px;font-size:12px;color:#1e1e1e;letter-spacing:0.4px;letter-spacing:0.22px">STORE ROOM</div>
<div class="rp" style="right:61.5px;top:654.0px;font-size:12px;color:#1e1e1e;letter-spacing:0.4px;letter-spacing:0.5px">6930000000</div>
<div class="a" style="left:63px;top:670.9px;width:898px;height:20.3px;background:#f1f1f1"></div>
<div class="rp" style="left:67px;top:674.3px;font-size:12px;color:#1e1e1e;letter-spacing:0.4px">Unbilled</div>
<div class="rp" style="right:684.5px;top:674.3px;font-size:12px;color:#1e1e1e;letter-spacing:0.4px">266</div>
<div class="rp" style="left:343px;top:674.3px;font-size:12px;color:#1e1e1e;letter-spacing:0.4px;letter-spacing:0.8px">16/10/2018</div>
<div class="rp" style="left:423px;top:674.3px;font-size:12px;color:#1e1e1e;letter-spacing:0.4px;letter-spacing:0.8px">16/10/2018</div>
<div class="rp" style="right:485.5px;top:674.3px;font-size:12px;color:#1e1e1e;letter-spacing:0.4px">1</div>
<div class="rp" style="right:371.5px;top:674.3px;font-size:12px;color:#1e1e1e;letter-spacing:0.4px;letter-spacing:0.5px">£9,000.0000</div>
<div class="rp" style="left:655.5px;top:674.3px;font-size:12px;color:#1e1e1e;letter-spacing:0.4px;letter-spacing:0.22px">STORE ROOM</div>
<div class="rp" style="right:61.5px;top:674.3px;font-size:12px;color:#1e1e1e;letter-spacing:0.4px;letter-spacing:0.5px">43110|220</div>
<div class="rp" style="left:67px;top:694.6px;font-size:12px;color:#1e1e1e;letter-spacing:0.4px">Unbilled</div>
<div class="rp" style="right:684.5px;top:694.6px;font-size:12px;color:#1e1e1e;letter-spacing:0.4px">267</div>
<div class="rp" style="left:343px;top:694.6px;font-size:12px;color:#1e1e1e;letter-spacing:0.4px;letter-spacing:0.8px">16/10/2018</div>
<div class="rp" style="left:423px;top:694.6px;font-size:12px;color:#1e1e1e;letter-spacing:0.4px;letter-spacing:0.8px">15/10/2018</div>
<div class="rp" style="right:485.5px;top:694.6px;font-size:12px;color:#1e1e1e;letter-spacing:0.4px">1</div>
<div class="rp" style="right:371.5px;top:694.6px;font-size:12px;color:#1e1e1e;letter-spacing:0.4px;letter-spacing:0.5px">£1,000.0000</div>
<div class="rp" style="left:655.5px;top:694.6px;font-size:12px;color:#1e1e1e;letter-spacing:0.4px;letter-spacing:0.22px">STORE ROOM</div>
<div class="rp" style="right:61.5px;top:694.6px;font-size:12px;color:#1e1e1e;letter-spacing:0.4px;letter-spacing:0.5px">43110|220</div>
<div class="rp" style="left:67px;top:714.5px;font-weight:bold;font-size:13.3px;color:#000">Vendor Total</div>
<div class="rp" style="right:73.5px;top:716.5px;font-weight:bold;font-size:14.6px;font-family:'Liberation Serif',serif;color:#000">£10,396.0000</div>
</div>
<div class="a" style="left:1885px;top:77px;width:21px;height:751px;background:linear-gradient(90deg,#fbfbfb,#ececec)"></div>
<svg class="a" style="left:1885px;top:77px" width="21" height="751" viewBox="1885 77 21 751"><path d="M1889.5 89h11l-5.5 -5z" fill="#4a5a7a"/><defs><linearGradient id="th" x1="0" x2="1" y1="0" y2="0"><stop offset="0" stop-color="#e4e8ee"/><stop offset="0.5" stop-color="#c4ccd8"/><stop offset="0.6" stop-color="#e8ecf2"/><stop offset="1" stop-color="#ccd4de"/></linearGradient></defs><rect x="1886.5" y="98.5" width="18" height="55" rx="2" fill="url(#th)" stroke="#6d7f9c" stroke-width="1"/><path d="M1891 122.5h9M1891 124.5h9M1891 126.5h9M1891 128.5h9" stroke="#5a6a88" stroke-width="1"/><path d="M1890 815.5h11l-5.5 6z" fill="#4a5a7a"/></svg>
<div class="a" style="left:260px;top:828px;width:1625px;height:21px;background:linear-gradient(#fbfbfb,#ececec)"></div>
<svg class="a" style="left:260px;top:828px" width="1625" height="21" viewBox="260 828 1625 21"><path d="M273 834v11l-6 -5.5z" fill="#9aaad0"/><path d="M1872.5 834v11l6 -5.5z" fill="#9aaad0"/></svg>
</body></html>
